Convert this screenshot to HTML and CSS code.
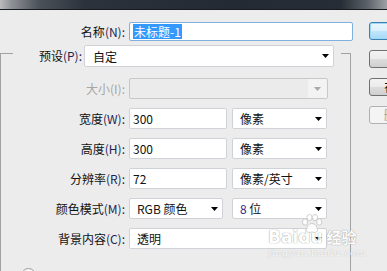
FILE: index.html
```html
<!DOCTYPE html>
<html lang="zh-CN">
<head>
<meta charset="utf-8">
<title>新建</title>
<link rel="stylesheet" href="styles.css">
</head>
<body>
<div class="titlebar"></div>
<div class="dialog">
  <div class="main">
    <div class="row name-row">
      <span class="label">名称<span class="key">(N):</span></span>
      <div class="field input name-field"><span class="sel">未标题-1</span></div>
    </div>
    <fieldset class="group">
      <legend class="preset">
        <div class="preset-inner">
          <span class="label preset-label">预设<span class="key">(P):</span></span>
          <div class="field select preset-select"><span>自定</span><svg class="arrow" width="7" height="4" viewBox="0 0 7 4"><path d="M0 0H7L3.5 4Z"/></svg></div>
        </div>
      </legend>
      <div class="row">
        <span class="label off">大小(I):</span>
        <div class="field select disabled size-select"><span></span><span class="dd"><svg class="arrow" width="7" height="4" viewBox="0 0 7 4"><path d="M0 0H7L3.5 4Z"/></svg></span></div>
      </div>
      <div class="row">
        <span class="label">宽度<span class="key">(W):</span></span>
        <div class="field input num">300</div>
        <div class="field select unit"><span>像素</span><svg class="arrow" width="7" height="4" viewBox="0 0 7 4"><path d="M0 0H7L3.5 4Z"/></svg></div>
      </div>
      <div class="row">
        <span class="label">高度<span class="key">(H):</span></span>
        <div class="field input num">300</div>
        <div class="field select unit"><span>像素</span><svg class="arrow" width="7" height="4" viewBox="0 0 7 4"><path d="M0 0H7L3.5 4Z"/></svg></div>
      </div>
      <div class="row">
        <span class="label">分辨率<span class="key">(R):</span></span>
        <div class="field input num">72</div>
        <div class="field select unit"><span>像素/英寸</span><svg class="arrow" width="7" height="4" viewBox="0 0 7 4"><path d="M0 0H7L3.5 4Z"/></svg></div>
      </div>
      <div class="row">
        <span class="label">颜色模式<span class="key">(M):</span></span>
        <div class="field select mode"><span>RGB 颜色</span><svg class="arrow" width="7" height="4" viewBox="0 0 7 4"><path d="M0 0H7L3.5 4Z"/></svg></div>
        <div class="field select bits"><span><span class="eight">8</span> 位</span><svg class="arrow" width="7" height="4" viewBox="0 0 7 4"><path d="M0 0H7L3.5 4Z"/></svg></div>
      </div>
      <div class="row">
        <span class="label">背景内容<span class="key">(C):</span></span>
        <div class="field select bg"><span>透明</span><svg class="arrow" width="7" height="4" viewBox="0 0 7 4"><path d="M0 0H7L3.5 4Z"/></svg></div>
      </div>
      <div class="advanced"></div>
    </fieldset>
  </div>
  <div class="buttons">
    <div class="btn default">确定</div>
    <div class="btn">取消</div>
    <div class="btn">存储预设(S)...</div>
    <div class="btn disabled">删除预设(D)...</div>
  </div>
</div>
<div class="watermark">
  <div class="wm-logo">
    <span class="wm-bai">Bai</span><span class="wm-du">du</span><svg class="paw" width="22" height="20" viewBox="0 0 22 20"><g fill="#fff" stroke="#c9c9c9" stroke-width="1"><ellipse cx="4" cy="8" rx="2.6" ry="3.2"/><ellipse cx="8.5" cy="3.6" rx="2.6" ry="3.1"/><ellipse cx="14" cy="3.6" rx="2.6" ry="3.1"/><ellipse cx="18.3" cy="8" rx="2.6" ry="3.2"/><path d="M11 9.5C7.5 9.5 5 14 5.5 16.5C6 19 9 18.5 11 18C13 18.5 16 19 16.5 16.5C17 14 14.5 9.5 11 9.5Z"/></g></svg><span class="wm-jy">经验</span>
  </div>
  <div class="wm-url">jingyan.baidu.com</div>
</div>
</body>
</html>
```
FILE: styles.css
```css
body {
  margin: 0;
  width: 387px;
  height: 271px;
  overflow: hidden;
  position: relative;
  background: #ececec;
  font: 12px "Noto Sans CJK SC", "Noto Sans", sans-serif;
  color: #111;
}

.titlebar {
  height: 9px;
  border-bottom: 1px solid #171b20;
  background: linear-gradient(to right, #b9bbbd 0, #8d9095 3%, #4c525a 10%, #2b323b 22%, #232a33 60%, #262d36 88%, #5c6268 95%, #9ea2a6 100%);
}

.dialog {
  display: flex;
  padding-top: 12px;
}

.main {
  width: 353px;
  flex: none;
}

.row {
  display: flex;
  align-items: center;
  height: 21px;
  margin-bottom: 9px;
}

.name-row {
  height: 19px;
  margin-bottom: 0;
}

.label {
  flex: none;
  text-align: right;
  white-space: nowrap;
  line-height: 1;
}

.key {
  color: #1d2456;
}

.name-row .label {
  width: 125px;
}

.group .label {
  width: 112px;
}

.label.off {
  color: #a6a6a6;
}

.field {
  flex: none;
  margin-left: 4px;
  height: 100%;
  box-sizing: border-box;
  border: 1px solid #cfd3d8;
  border-radius: 2px;
  background: #fff;
  display: flex;
  align-items: center;
  padding: 0 3px;
  white-space: nowrap;
}

.name-field {
  width: 224px;
  border-color: #7fb0df;
}

.sel {
  background: #3399ff;
  color: #fff;
  height: 15px;
  line-height: 15px;
  padding: 0 1px;
}

.select {
  justify-content: space-between;
  padding: 0 4px 0 7px;
}

.arrow {
  display: block;
  fill: #000;
}

.group {
  margin: 4px 0 0;
  padding: 17px 0 0 12px;
  width: 351px;
  min-height: 260px;
  box-sizing: border-box;
  border: 1px solid #a2a2a2;
  border-bottom: none;
}

.group .preset {
  padding: 0 7px 0 0;
  margin: 0;
  height: 16px;
}

.preset-inner {
  display: flex;
  align-items: flex-start;
  height: 16px;
}

.group .preset-label {
  width: 69px;
  line-height: 22px;
}

.group .preset-select {
  margin-left: 2px;
  width: 250px;
  height: 22px;
  padding-left: 8px;
}

.size-select {
  width: 199px;
  padding-right: 0;
  background: #ebebeb;
  border-color: #c8c8c8;
}

.dd {
  width: 19px;
  height: 100%;
  background: #f3f3f3;
  display: flex;
  align-items: center;
  justify-content: center;
}

.disabled .arrow {
  fill: #a8a8a8;
}

.num {
  width: 98px;
}

.unit {
  width: 95px;
  margin-left: 5px;
}

.mode {
  width: 94px;
}

.bits {
  width: 95px;
  margin-left: 9px;
}

.eight {
  color: #3b2a8a;
}

.bg {
  width: 198px;
}

.advanced {
  width: 13px;
  height: 13px;
  margin: 19px 0 0 8px;
  border: 1px solid #9c9c9c;
  border-radius: 50%;
  background: #f7f7f7;
}

.buttons {
  flex: none;
  margin-left: 16px;
  display: flex;
  flex-direction: column;
  gap: 10px;
}

.btn {
  width: 104px;
  height: 18px;
  box-sizing: border-box;
  border: 1px solid #707070;
  border-radius: 3px;
  background: linear-gradient(#f3f3f3, #ebebeb 50%, #dddddd 51%, #cfcfcf);
  text-align: center;
  line-height: 16px;
  white-space: nowrap;
}

.btn.default {
  border-color: #3c7fb1;
  box-shadow: inset 0 0 0 1px #9fd8f5;
  background: linear-gradient(#eaf6fd, #d9f0fc 50%, #bee6fd 51%, #a7d9f5);
}

.btn.disabled {
  border-color: #adb2b5;
  color: #a0a0a0;
  background: #f4f4f4;
}

.watermark {
  position: absolute;
  left: 268px;
  top: 214px;
  opacity: 0.85;
  pointer-events: none;
}

.wm-logo {
  display: flex;
  align-items: flex-end;
  height: 32px;
  font-family: "DejaVu Sans", sans-serif;
  font-weight: bold;
  color: #fff;
  text-shadow: 0 0 1px #9a9a9a, 0 0 1px #9a9a9a;
}

.wm-bai,
.wm-du {
  font-size: 17px;
  line-height: 18px;
}

.paw {
  margin: 0 0 10px -22px;
  align-self: flex-start;
}

.wm-jy {
  font-family: "Noto Sans CJK SC", sans-serif;
  font-size: 15px;
  line-height: 18px;
  margin-left: 4px;
}

.wm-url {
  font: 10px "DejaVu Serif", serif;
  color: #fff;
  text-shadow: 0 0 1px #a0a0a0;
  letter-spacing: 0.3px;
  margin-top: 1px;
}
```
